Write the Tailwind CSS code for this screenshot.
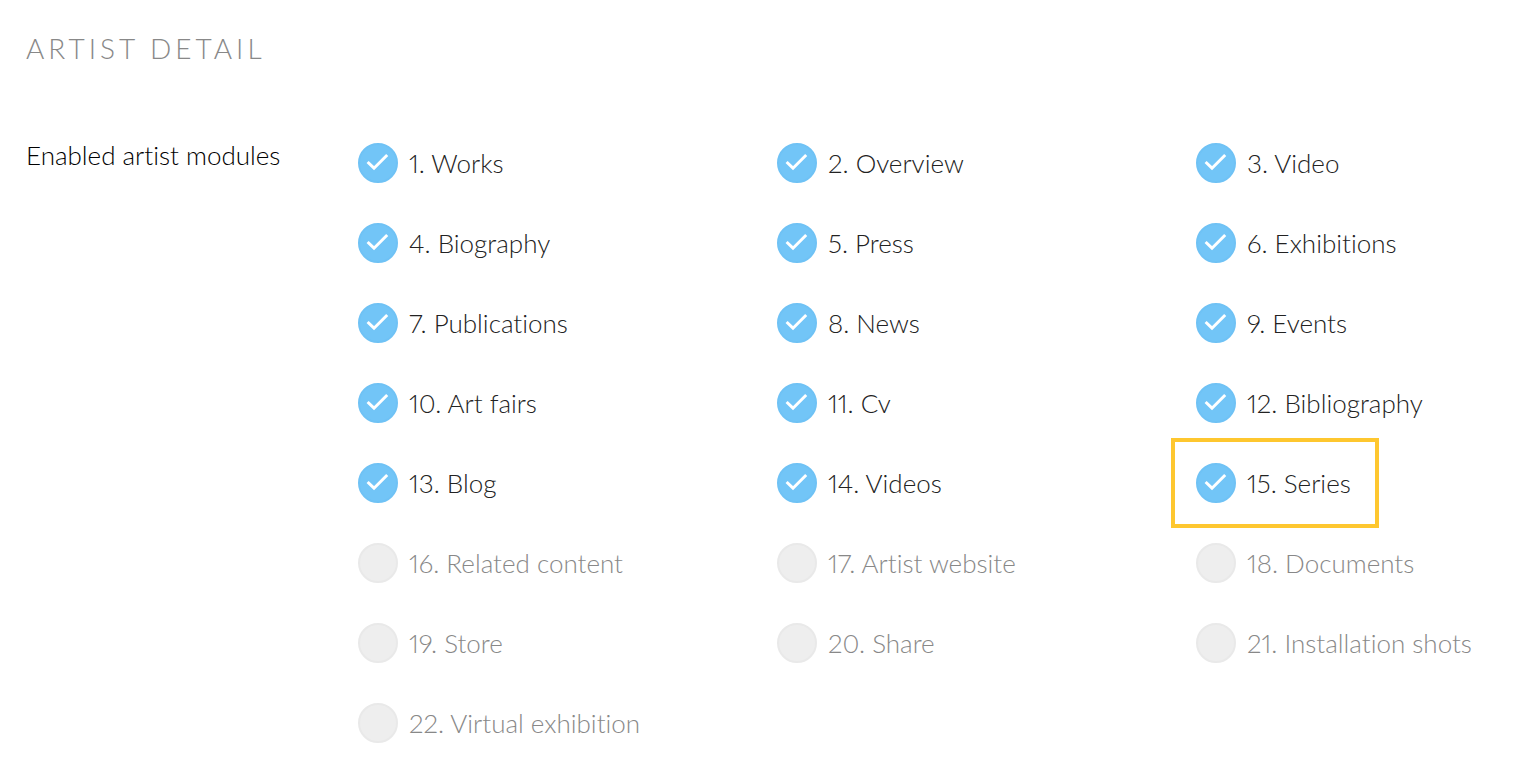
<!DOCTYPE html>
<html lang="en">
<head>
  <meta charset="UTF-8" />
  <meta name="viewport" content="width=device-width, initial-scale=1.0"/>
  <title>Artist detail</title>
  <script src="https://cdn.jsdelivr.net/npm/@tailwindcss/browser@4"></script>
</head>
<body class="bg-white text-black font-['Lato',sans-serif] font-light proportional-nums [font-variant-ligatures:none]">
  <main class="px-[26px] pt-[30px]">

    <!-- Header -->
    <h1 class="text-[28px] leading-9 font-light tracking-[4px] text-[#888] uppercase">Artist detail</h1>

    <!-- Modules -->
    <fieldset class="mt-[75px] flex items-start" aria-labelledby="modulesLabel">
      <div id="modulesLabel" class="w-[332px] shrink-0 text-[26px] leading-7">Enabled artist modules</div>
      <div id="moduleGrid" class="mt-0.5 grid grow grid-cols-3 gap-x-32 gap-y-10"></div>
    </fieldset>
  </main>

  <!-- Script -->
  <script>
  const modules = [
    'Works', 'Overview', 'Video',
    'Biography', 'Press', 'Exhibitions',
    'Publications', 'News', 'Events',
    'Art fairs', 'Cv', 'Bibliography',
    'Blog', 'Videos', 'Series',
    'Related content', 'Artist website', 'Documents',
    'Store', 'Share', 'Installation shots',
    'Virtual exhibition'
  ];
  const enabledCount = 15;
  const highlighted = 'Series';

  function renderModule(name, index) {
    const label = document.createElement('label');
    label.className = "flex w-fit items-center gap-[11px] whitespace-nowrap cursor-pointer pr-[3px]";
    if (name === highlighted) {
      label.className += " outline-4 outline-offset-[21px] outline-[#fec72f]";
    }
    label.innerHTML = `
      <span class="grid size-10 shrink-0">
        <input type="checkbox" class="peer col-start-1 row-start-1 size-10 appearance-none rounded-full border-2 border-[#e9e9e9] bg-[#eee] checked:border-[#6fc2f5] checked:bg-[#72c5f7]" ${index < enabledCount ? 'checked' : ''} />
        <svg class="pointer-events-none invisible col-start-1 row-start-1 size-10 peer-checked:visible" viewBox="0 0 40 40" fill="none" stroke="#fff" stroke-width="3">
          <path d="M9.6 19L16 25.2L29.2 12" />
        </svg>
      </span>
      <span class="text-[26px] leading-8 ${index < enabledCount ? 'text-[#222]' : 'text-[#888]'}">${index + 1}. ${name}</span>`;
    return label;
  }

  const grid = document.getElementById('moduleGrid');
  modules.forEach((name, index) => grid.appendChild(renderModule(name, index)));
  </script>
</body>
</html>
